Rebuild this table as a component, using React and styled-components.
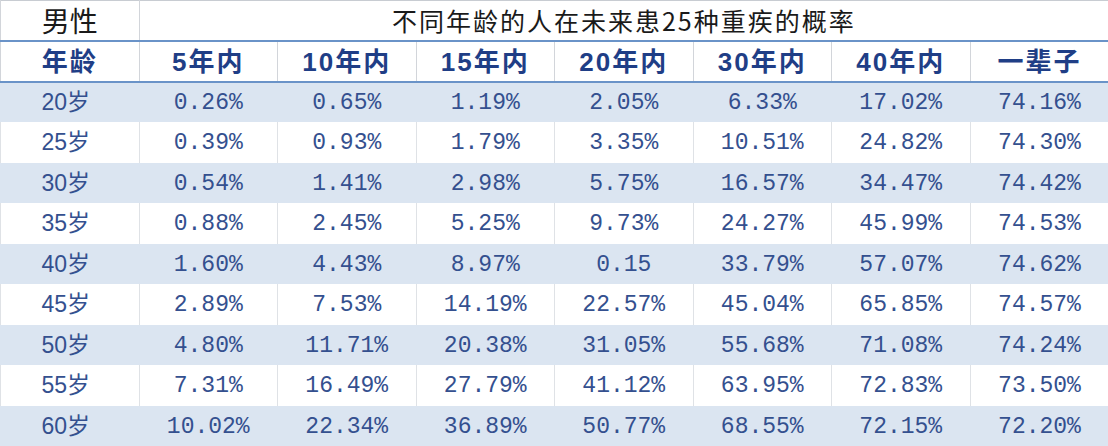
import React from "react";
import styled, { createGlobalStyle } from "styled-components";

const GlobalStyle = createGlobalStyle`
  html, body { margin: 0; padding: 0; background: #ffffff; }
  body { width: 1108px; height: 446px; overflow: hidden; }
`;

const periods = ["5年内", "10年内", "15年内", "20年内", "30年内", "40年内", "一辈子"];

const rows = [
  ["20岁", "0.26%", "0.65%", "1.19%", "2.05%", "6.33%", "17.02%", "74.16%"],
  ["25岁", "0.39%", "0.93%", "1.79%", "3.35%", "10.51%", "24.82%", "74.30%"],
  ["30岁", "0.54%", "1.41%", "2.98%", "5.75%", "16.57%", "34.47%", "74.42%"],
  ["35岁", "0.88%", "2.45%", "5.25%", "9.73%", "24.27%", "45.99%", "74.53%"],
  ["40岁", "1.60%", "4.43%", "8.97%", "0.15", "33.79%", "57.07%", "74.62%"],
  ["45岁", "2.89%", "7.53%", "14.19%", "22.57%", "45.04%", "65.85%", "74.57%"],
  ["50岁", "4.80%", "11.71%", "20.38%", "31.05%", "55.68%", "71.08%", "74.24%"],
  ["55岁", "7.31%", "16.49%", "27.79%", "41.12%", "63.95%", "72.83%", "73.50%"],
  ["60岁", "10.02%", "22.34%", "36.89%", "50.77%", "68.55%", "72.15%", "72.20%"],
];

const Table = styled.table`
  width: 1108px;
  table-layout: fixed;
  border-collapse: collapse;
  font-family: "Liberation Mono", "Noto Sans CJK SC", monospace;
`;

const TitleRow = styled.tr`
  height: 40px;
  border-top: 1px solid #c8ccd2;
  border-bottom: 2px solid #6a93c8;
`;

const TitleCell = styled.th`
  padding: 0;
  font-family: "Noto Sans CJK SC", sans-serif;
  font-weight: 400;
  color: #1a1a1a;
  font-size: ${(p) => p.$size}px;
  letter-spacing: ${(p) => p.$spacing || 0}px;
  border-left: 1px solid #d2d5da;
  border-right: 1px solid #d2d5da;
  line-height: 1;
`;

const HeadRow = styled.tr`
  height: 41px;
  border-bottom: 2px solid #6a93c8;
`;

const HeadCell = styled.th`
  padding: 2px 0 0;
  font-family: "Liberation Sans", "Noto Sans CJK SC", sans-serif;
  font-weight: 700;
  font-size: 26px;
  letter-spacing: 2px;
  color: #1f3e86;
  border-left: 1px solid #d2d5da;
  line-height: 1;
`;

const DataRow = styled.tr`
  height: 40.5px;
  background: ${(p) => (p.$shaded ? "#dbe5f1" : "#ffffff")};
`;

const DataCell = styled.td`
  padding: 3px 0 0;
  text-align: center;
  font-size: 23px;
  color: #34508f;
  line-height: 1;
  border-left: 1px solid ${(p) => (p.$shaded ? "#dbe5f1" : "#dfe2e6")};
`;

const Age = styled.span`
  font-family: "Liberation Sans", "Noto Sans CJK SC", sans-serif;
  font-size: 23px;
  margin-left: -8px;
`;

export default function App() {
  return (
    <>
      <GlobalStyle />
      <Table>
        <colgroup>
          {Array.from({ length: 8 }).map((_, i) => (
            <col key={i} style={{ width: 138.5 }} />
          ))}
        </colgroup>
        <tbody>
          <TitleRow>
            <TitleCell $size={28}>男性</TitleCell>
            <TitleCell colSpan={7} $size={25} $spacing={2}>
              不同年龄的人在未来患25种重疾的概率
            </TitleCell>
          </TitleRow>
          <HeadRow>
            <HeadCell>年龄</HeadCell>
            {periods.map((p) => (
              <HeadCell key={p}>{p}</HeadCell>
            ))}
          </HeadRow>
          {rows.map((r, i) => (
            <DataRow key={r[0]} $shaded={i % 2 === 0}>
              {r.map((v, j) => (
                <DataCell key={j} $shaded={i % 2 === 0}>
                  {j === 0 ? <Age>{v}</Age> : v}
                </DataCell>
              ))}
            </DataRow>
          ))}
        </tbody>
      </Table>
    </>
  );
}
